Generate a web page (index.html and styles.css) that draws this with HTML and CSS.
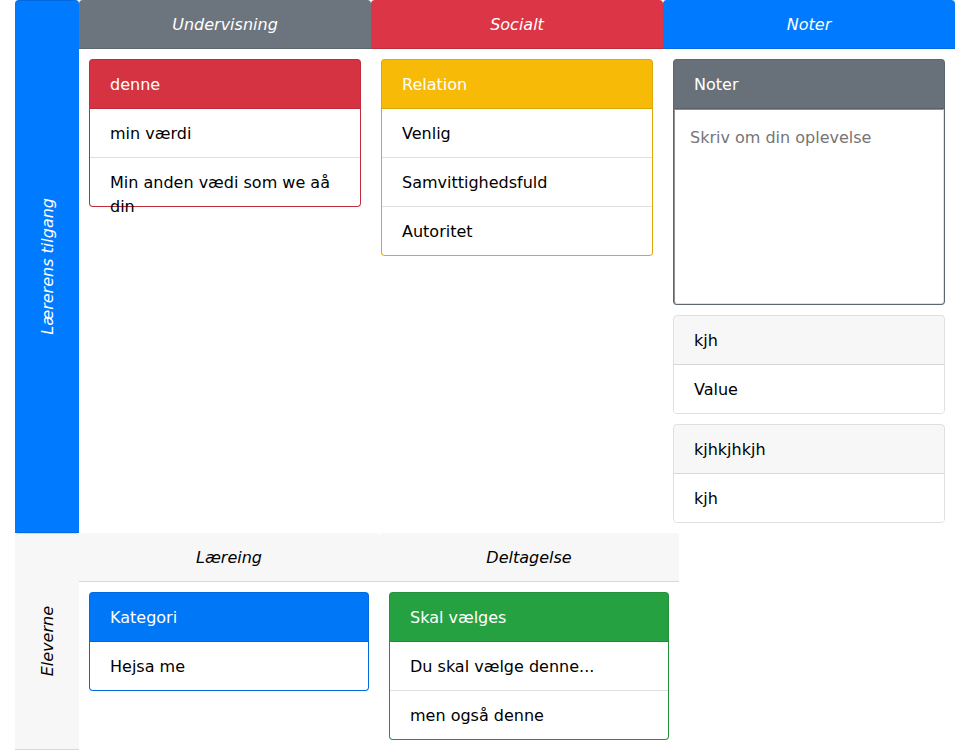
FILE: index.html
```
<!DOCTYPE html>
<html lang="da">
<head>
<meta charset="utf-8">
<meta name="viewport" content="width=device-width, initial-scale=1">
<title>Lærerens tilgang</title>
<link rel="stylesheet" href="styles.css">
</head>
<body>
<main class="board">
  <section class="group">
    <div class="side primary"><span class="side-label">Lærerens tilgang</span></div>
    <div class="column">
      <div class="column-head secondary">Undervisning</div>
      <div class="column-body">
        <article class="card danger">
          <div class="card-head">denne</div>
          <ul class="items">
            <li>min værdi</li>
            <li>Min anden vædi som we aå din</li>
          </ul>
        </article>
      </div>
    </div>
    <div class="column">
      <div class="column-head danger">Socialt</div>
      <div class="column-body">
        <article class="card warning">
          <div class="card-head">Relation</div>
          <ul class="items">
            <li>Venlig</li>
            <li>Samvittighedsfuld</li>
            <li>Autoritet</li>
          </ul>
        </article>
      </div>
    </div>
    <div class="column">
      <div class="column-head primary">Noter</div>
      <div class="column-body">
        <article class="card secondary">
          <label class="card-head" for="notes">Noter</label>
          <textarea class="notes" id="notes" placeholder="Skriv om din oplevelse"></textarea>
        </article>
        <article class="card">
          <div class="card-head">kjh</div>
          <ul class="items">
            <li>Value</li>
          </ul>
        </article>
        <article class="card">
          <div class="card-head">kjhkjhkjh</div>
          <ul class="items">
            <li>kjh</li>
          </ul>
        </article>
      </div>
    </div>
  </section>
  <section class="group">
    <div class="side light"><span class="side-label">Eleverne</span></div>
    <div class="column">
      <div class="column-head light">Læreing</div>
      <div class="column-body">
        <article class="card primary">
          <div class="card-head">Kategori</div>
          <ul class="items">
            <li>Hejsa me</li>
          </ul>
        </article>
      </div>
    </div>
    <div class="column">
      <div class="column-head light">Deltagelse</div>
      <div class="column-body">
        <article class="card success">
          <div class="card-head">Skal vælges</div>
          <ul class="items">
            <li>Du skal vælge denne...</li>
            <li>men også denne</li>
          </ul>
        </article>
      </div>
    </div>
  </section>
</main>
</body>
</html>
```
FILE: styles.css
```
:root {
  --line: rgba(0, 0, 0, 0.125);
  --radius: 4px;
  --row-padding: 13px 20px 11px;
}

*,
*::before,
*::after {
  box-sizing: border-box;
}

body {
  margin: 0;
  background: #fff;
  color: #000;
  font: 16px/24px "DejaVu Sans", sans-serif;
}

.board {
  padding: 0 15px;
}

.group {
  display: flex;
}

/* Colour themes shared by labels, column heads and cards */
.primary { background-color: #007bff; color: #fff; }
.secondary { background-color: #6c757d; color: #fff; }
.danger { background-color: #dc3545; color: #fff; }
.warning { background-color: #ffc107; color: #fff; }
.success { background-color: #28a745; color: #fff; }
.light { background-color: #f7f7f7; }

.side {
  flex: 0 0 64px;
  display: flex;
  align-items: center;
  justify-content: center;
  padding-left: 2px;
  border: solid var(--line);
  border-width: 1px 0;
  border-radius: var(--radius) var(--radius) 0 0;
  font-style: italic;
}

.side-label {
  writing-mode: vertical-rl;
  transform: rotate(180deg);
}

.column {
  flex: 1 1 0;
  min-width: 0;
  max-width: 300px;
}

.column-head {
  padding: var(--row-padding);
  border-bottom: 1px solid var(--line);
  border-radius: var(--radius) var(--radius) 0 0;
  font-style: italic;
  text-align: center;
}

.column-body {
  display: flex;
  flex-direction: column;
  gap: 10px;
  padding: 10px;
}

.card {
  border: 1px solid var(--line);
  border-radius: var(--radius);
}

.card-head {
  display: block;
  padding: var(--row-padding);
  border-bottom: 1px solid var(--line);
  border-radius: 3px 3px 0 0;
  background-color: rgba(0, 0, 0, 0.03);
}

.items {
  margin: 0;
  padding: 0;
  list-style: none;
  border-radius: 0 0 3px 3px;
  background: #fff;
  color: #000;
}

.items li {
  box-sizing: content-box;
  height: 24px;
  padding: var(--row-padding);
}

.items li + li {
  border-top: 1px solid var(--line);
}

.notes {
  display: block;
  width: 100%;
  height: 195px;
  padding: 16px 15px 15px;
  border: 1px solid;
  border-color: #8e8e93 #dfdfe1 #dfdfe1 #8e8e93;
  border-radius: 0 0 3px 3px;
  outline: 0;
  background: #fff;
  color: #000;
  font: inherit;
  resize: none;
}

.notes::placeholder {
  color: #757575;
}
```
